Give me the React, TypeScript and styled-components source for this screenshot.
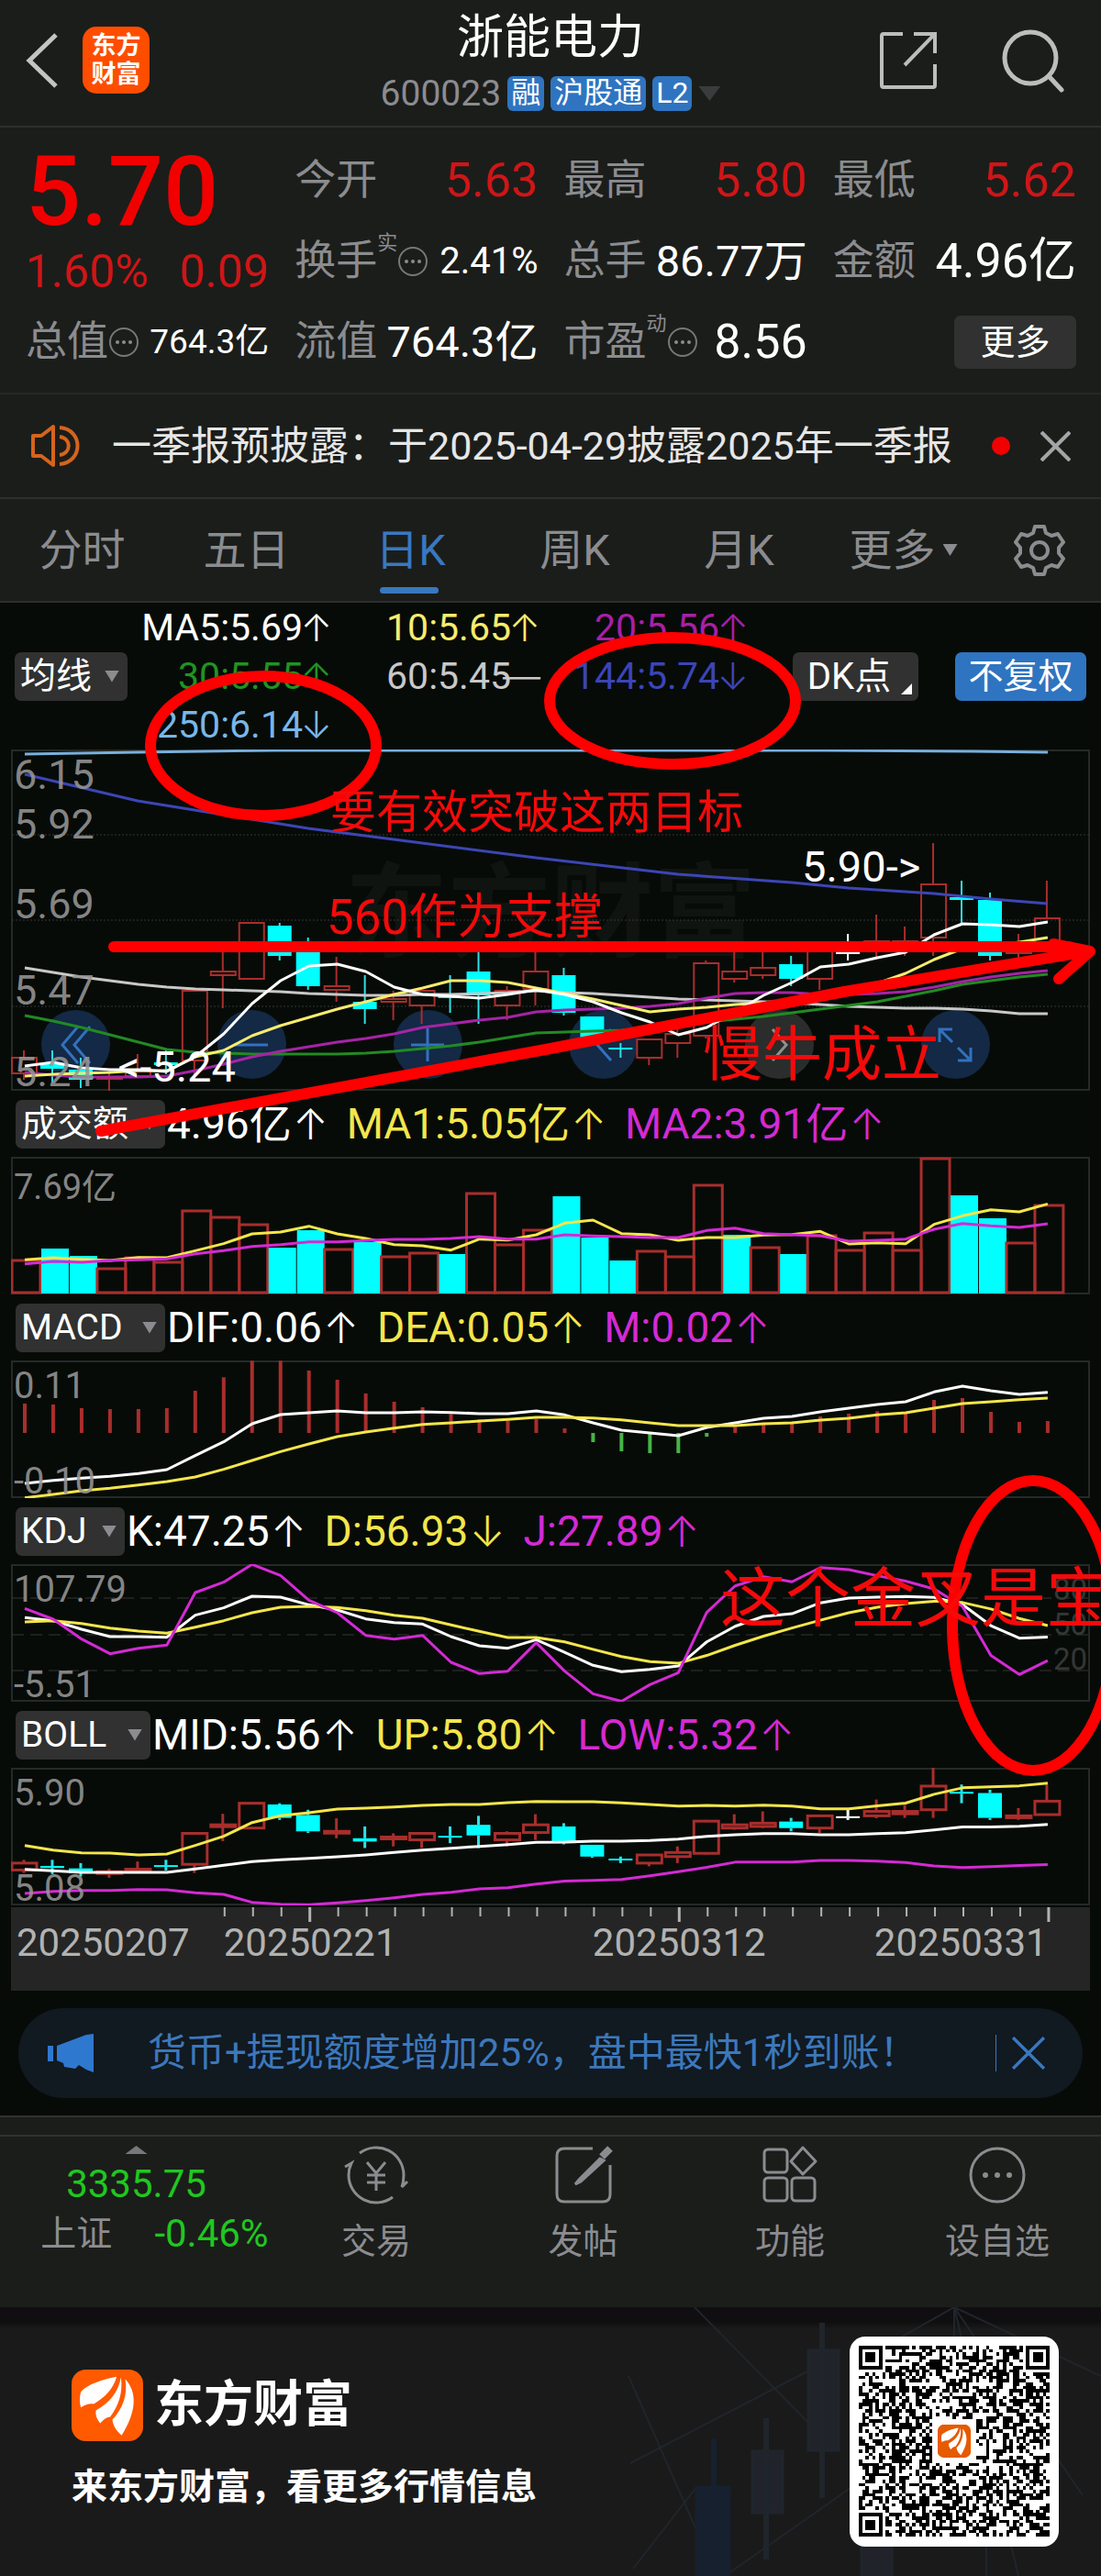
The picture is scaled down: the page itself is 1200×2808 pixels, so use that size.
import React from "react";
import styled, { createGlobalStyle } from "styled-components";

const Global = createGlobalStyle`
  * { box-sizing: border-box; }
  body { margin: 0; background: #1b1d1a; }
  button, select { font: inherit; color: inherit; border: 0; margin: 0; padding: 0; background: none; cursor: pointer; }
`;

const RED = "#a82e2c";
const CYAN = "#00ffff";
const YELLOW = "#f3e64b";
const PINK = "#d42ad4";

const Page = styled.div`
  display: flex;
  flex-direction: column;
  overflow-x: hidden;
  background: #1b1d1a;
  color: #fff;
  font-family: Roboto, "Noto Sans CJK SC", sans-serif;
`;

/* ---------- header ---------- */
const Header = styled.header`
  display: grid;
  grid-template-columns: 1fr auto 1fr;
  height: 139px;
  border-bottom: 2px solid #2d2f2d;
`;
const HeaderSide = styled.div<{ $end?: boolean }>`
  display: flex;
  align-items: center;
  justify-content: ${(p) => (p.$end ? "flex-end" : "flex-start")};
  gap: ${(p) => (p.$end ? 70 : 26)}px;
  padding: ${(p) => (p.$end ? "0 40px 6px 0" : "0 0 6px 28px")};
`;
const IconButton = styled.button`
  display: flex;
  align-items: center;
  justify-content: center;
  flex: none;
`;
const CloseButton = styled(IconButton)`
  color: #a5a5a7;
`;
const AppBadge = styled.div`
  display: flex;
  flex-direction: column;
  align-items: center;
  justify-content: center;
  width: 73px;
  height: 73px;
  border-radius: 15px;
  background: #ff4d00;
  font-size: 27px;
  line-height: 31px;
  font-weight: 700;
`;
const TitleBlock = styled.div`
  display: flex;
  flex-direction: column;
  align-items: center;
`;
const Title = styled.h1`
  margin: 9px 0 0;
  font-size: 51px;
  line-height: 64px;
  font-weight: 400;
`;
const CodeRow = styled.div`
  display: flex;
  align-items: center;
  gap: 7px;
  height: 58px;
  font-size: 39px;
  color: #8b8c90;
`;
const Tag = styled.span`
  height: 38px;
  padding: 0 4px;
  border-radius: 6px;
  background: #2f74c0;
  color: #fff;
  font-size: 32px;
  line-height: 37px;
`;
const Triangle = styled.span<{ $w: number; $h: number; $c: string; $up?: boolean }>`
  flex: none;
  width: ${(p) => p.$w}px;
  height: ${(p) => p.$h}px;
  background: ${(p) => p.$c};
  clip-path: ${(p) => (p.$up ? "polygon(50% 0, 100% 100%, 0 100%)" : "polygon(0 0, 100% 0, 50% 100%)")};
`;

/* ---------- quote ---------- */
const Quote = styled.section`
  display: grid;
  grid-template-columns: repeat(4, minmax(0, 1fr));
  grid-auto-rows: 88px;
  column-gap: 28px;
  padding: 14px 27px 11px 28px;
  border-bottom: 2px solid #262826;
`;
const PriceCell = styled.div`
  grid-row: span 2;
  display: flex;
  flex-direction: column;
  color: #d01517;
`;
const Price = styled.div`
  font-size: 106px;
  line-height: 112px;
  font-weight: 500;
  color: #f20000;
`;
const Change = styled.div`
  display: flex;
  justify-content: space-between;
  font-size: 50px;
  line-height: 62px;
`;
const Cell = styled.div`
  display: flex;
  align-items: center;
  justify-content: space-between;
  white-space: nowrap;
`;
const Label = styled.span`
  display: flex;
  align-items: center;
  font-size: 45px;
  line-height: 60px;
  color: #8b8c90;
`;
const Sup = styled.sup`
  align-self: flex-start;
  font-size: 22px;
  line-height: 20px;
`;
const Value = styled.span<{ $size?: number; $red?: boolean }>`
  font-size: ${(p) => p.$size ?? 52}px;
  line-height: 60px;
  color: ${(p) => (p.$red ? "#d01517" : "#fff")};
`;
const MoreButton = styled.button`
  width: 133px;
  height: 58px;
  margin-left: auto;
  border-radius: 7px;
  background: #303130;
  font-size: 38px;
  line-height: 54px;
`;

/* ---------- notice ---------- */
const Notice = styled.section`
  display: flex;
  align-items: center;
  height: 114px;
  padding: 0 33px;
  border-bottom: 2px solid #2d2f2d;
`;
const NoticeText = styled.a`
  flex: 1;
  margin-left: 34px;
  overflow: hidden;
  white-space: nowrap;
  font-size: 43px;
  line-height: 60px;
  color: #e6e6e6;
  text-decoration: none;
`;
const Dot = styled.span`
  width: 20px;
  height: 20px;
  margin-right: 33px;
  border-radius: 50%;
  background: #f20000;
`;

/* ---------- tabs ---------- */
const Tabs = styled.nav`
  display: grid;
  grid-template-columns: repeat(6, 1fr) 126px;
  height: 113px;
  border-bottom: 2px solid #2d2f2d;
`;
const Tab = styled.button<{ $active?: boolean }>`
  position: relative;
  display: flex;
  align-items: center;
  justify-content: center;
  gap: 8px;
  font-size: 47px;
  line-height: 60px;
  color: ${(p) => (p.$active ? "#3878c0" : "#8b8c90")};
  &::after {
    content: "";
    display: ${(p) => (p.$active ? "block" : "none")};
    position: absolute;
    left: 50%;
    bottom: 8px;
    width: 64px;
    height: 7px;
    margin-left: -34px;
    border-radius: 4px;
    background: #3878c0;
  }
`;
const GearButton = styled(IconButton)`
  padding-right: 8px;
`;

/* ---------- charts ---------- */
const Charts = styled.section`
  position: relative;
  background: #070b08;
`;
const LegendRow = styled.div`
  display: flex;
  align-items: center;
  height: 160px;
  padding: 0 16px;
`;
const Legend = styled.div`
  flex: 1;
  display: grid;
  grid-template-columns: 223fr 227fr 227fr;
  grid-auto-rows: 53px;
`;
const LegendItem = styled.span<{ $c: string }>`
  display: flex;
  align-items: center;
  justify-content: flex-end;
  font-size: 41px;
  line-height: 50px;
  color: ${(p) => p.$c};
`;
const ArrowGlyph = styled.span<{ $w: number }>`
  display: flex;
  justify-content: flex-end;
  width: ${(p) => p.$w}px;
  font-family: Inter, sans-serif;
  font-weight: 300;
`;
const Picker = styled.label<{ $w: number }>`
  position: relative;
  flex: none;
  display: flex;
  align-items: center;
  width: ${(p) => p.$w}px;
  height: 53px;
  padding-right: 9px;
  border-radius: 7px;
  background: #303130;
`;
const PickerSelect = styled.select`
  flex: 1;
  min-width: 0;
  height: 53px;
  padding-left: 6px;
  appearance: none;
  outline: none;
  font-size: 39px;
`;
const DkButton = styled.button`
  position: relative;
  width: 137px;
  height: 53px;
  margin: 0 40px 0 48px;
  padding-right: 14px;
  border-radius: 7px;
  background: #303130;
  font-size: 40px;
  line-height: 51px;
  &::after {
    content: "";
    position: absolute;
    right: 7px;
    bottom: 7px;
    border-left: 12px solid transparent;
    border-bottom: 12px solid #fff;
  }
`;
const AdjustButton = styled.button`
  width: 143px;
  height: 53px;
  border-radius: 7px;
  background: #2f74c0;
  font-size: 38px;
  line-height: 49px;
`;
const Panel = styled.div<{ $h: number }>`
  position: relative;
  height: ${(p) => p.$h}px;
  margin: 0 12px;
`;
const Plot = styled.svg`
  display: block;
  width: 100%;
  height: 100%;
`;
const OverPlot = styled(Plot)`
  position: relative;
  pointer-events: none;
`;
const Axis = styled.span<{ $top: number; $size?: number }>`
  position: absolute;
  left: 3px;
  top: ${(p) => p.$top}px;
  font-size: ${(p) => p.$size ?? 40}px;
  line-height: 50px;
  color: rgba(150, 150, 150, 0.9);
`;
const Level = styled.span<{ $top: number }>`
  position: absolute;
  right: 3px;
  top: ${(p) => p.$top}px;
  font-size: 33px;
  line-height: 40px;
  color: #343735;
`;
const Extreme = styled.span<{ $x: number; $y: number }>`
  position: absolute;
  left: ${(p) => p.$x}%;
  top: ${(p) => p.$y}px;
  font-size: 47px;
  line-height: 50px;
`;
const Watermark = styled.span`
  position: absolute;
  top: 105px;
  left: 0;
  right: 0;
  text-align: center;
  font-size: 112px;
  line-height: 150px;
  font-weight: 700;
  color: #101411;
`;
const ZoomBar = styled.div`
  position: absolute;
  left: 33px;
  right: 109px;
  bottom: 13px;
  display: flex;
  justify-content: space-between;
`;
const RoundButton = styled.button<{ $muted?: boolean }>`
  display: flex;
  align-items: center;
  justify-content: center;
  width: 75px;
  height: 75px;
  border-radius: 50%;
  background: ${(p) => (p.$muted ? "rgba(66,68,67,.6)" : "rgba(28,62,110,.6)")};
  color: ${(p) => (p.$muted ? "#8f9090" : "#3271bd")};
`;
const IndicatorRow = styled.div`
  display: flex;
  align-items: center;
  height: 72px;
  padding-left: 17px;
  gap: 20px;
  white-space: nowrap;
`;
const IndicatorLead = styled.div`
  display: flex;
  align-items: center;
  gap: 2px;
`;
const Reading = styled.span<{ $c: string }>`
  display: flex;
  align-items: center;
  font-size: 46px;
  line-height: 50px;
  color: ${(p) => p.$c};
`;
const Dates = styled.div`
  position: relative;
  height: 91px;
  margin: 2px 12px 0;
  background: #242524;
`;
const DateText = styled.span<{ $x: number }>`
  position: absolute;
  left: ${(p) => p.$x}%;
  top: 14px;
  font-size: 42px;
  line-height: 50px;
  color: #b2b2b2;
`;
const Notes = styled.svg`
  position: absolute;
  left: 0;
  top: 0;
  width: 100%;
  pointer-events: none;
`;

/* ---------- promo ---------- */
const PromoWrap = styled.section`
  padding: 19px 20px;
  background: #070b08;
`;
const Promo = styled.div`
  display: flex;
  align-items: center;
  height: 98px;
  padding: 0 41px 0 32px;
  border-radius: 49px;
  background: #111921;
  color: #3878c0;
`;
const PromoText = styled.a`
  flex: 1;
  margin-left: 58px;
  overflow: hidden;
  white-space: nowrap;
  font-size: 42px;
  line-height: 60px;
  color: #3c78bb;
  text-decoration: none;
`;
const PromoClose = styled.button`
  display: flex;
  height: 40px;
  padding-left: 17px;
  align-items: center;
  border-left: 1px solid #3878c0;
`;

/* ---------- bottom bar ---------- */
const Strip = styled.div`
  height: 23px;
  border-top: 2px solid #313331;
  border-bottom: 2px solid #313331;
`;
const BottomBar = styled.nav`
  display: grid;
  grid-template-columns: 297fr 226fr 225fr 226fr 226fr;
  height: 186px;
`;
const IndexCell = styled.button`
  display: flex;
  flex-direction: column;
  align-items: center;
  padding-top: 10px;
  color: #1fc81f;
  font-size: 42px;
`;
const IndexValue = styled.span`
  margin: 6px 0 4px;
  line-height: 54px;
`;
const IndexRow = styled.span`
  display: flex;
  gap: 46px;
  padding-left: 40px;
  line-height: 46px;
`;
const IndexName = styled.span`
  color: #8b8c90;
  font-size: 39px;
`;
const NavItem = styled.button`
  display: flex;
  flex-direction: column;
  align-items: center;
  gap: 12px;
  padding-top: 9px;
  font-size: 38px;
  line-height: 54px;
  color: #8b8c90;
`;

/* ---------- footer ---------- */
const Footer = styled.footer`
  position: relative;
  display: flex;
  justify-content: space-between;
  height: 293px;
  padding: 32px 46px 0 78px;
  background: linear-gradient(#100d10 0, #100f10 16px, #1a1a1a 24px);
`;
const FooterArt = styled.svg`
  position: absolute;
  right: 0;
  top: 0;
`;
const Brand = styled.div`
  padding-top: 36px;
`;
const BrandRow = styled.div`
  display: flex;
  align-items: center;
  gap: 12px;
  font-size: 54px;
  line-height: 78px;
  font-weight: 700;
`;
const Tagline = styled.p`
  margin: 22px 0 0;
  font-size: 39px;
  line-height: 56px;
  font-weight: 700;
`;
const QrCard = styled.div`
  position: relative;
  width: 228px;
  height: 229px;
  padding: 10px;
  border-radius: 17px;
  background: #fff;
`;

/* ---------- data ---------- */
const xAt = (i: number) => 27 + 30.97 * i;

type Kind = "up" | "down" | "flat";
// kind, high, body top, body bottom, low
const candles: [Kind, number, number, number, number][] = [
  ["up", 1145, 1153, 1170, 1177], ["down", 1145, 1160, 1165, 1180], ["down", 1153, 1166, 1177, 1186],
  ["up", 1167, 1174, 1176, 1189], ["up", 1149, 1168, 1173, 1173], ["down", 1145, 1158, 1161, 1171],
  ["up", 1080, 1080, 1156, 1177], ["up", 1032, 1059, 1063, 1099], ["up", 1006, 1006, 1067, 1067],
  ["down", 1006, 1009, 1042, 1047], ["down", 1022, 1035, 1075, 1079], ["up", 1043, 1075, 1079, 1092],
  ["down", 1063, 1092, 1100, 1116], ["up", 1080, 1089, 1092, 1112], ["up", 1080, 1080, 1096, 1116],
  ["down", 1063, 1086, 1088, 1104], ["down", 1037, 1059, 1085, 1116], ["up", 1075, 1080, 1096, 1112],
  ["up", 1033, 1059, 1078, 1096], ["down", 1055, 1063, 1104, 1107], ["down", 1108, 1108, 1137, 1140],
  ["down", 1137, 1142, 1144, 1153], ["up", 1133, 1133, 1153, 1161], ["up", 1112, 1127, 1137, 1153],
  ["up", 1047, 1050, 1129, 1132], ["up", 1033, 1059, 1067, 1071], ["up", 1026, 1055, 1063, 1067],
  ["down", 1042, 1051, 1067, 1075], ["up", 1034, 1037, 1067, 1079], ["flat", 1018, 1038, 1040, 1047],
  ["up", 997, 1026, 1037, 1043], ["up", 1010, 1026, 1032, 1042], ["up", 919, 964, 1022, 1042],
  ["down", 960, 978, 981, 1006], ["down", 973, 981, 1042, 1047], ["up", 1018, 1037, 1039, 1047],
  ["up", 960, 1001, 1034, 1036],
];

const ma5 = [1162, 1158, 1164, 1166, 1166, 1168, 1152, 1127, 1094, 1069, 1053, 1051, 1059, 1076, 1084, 1086, 1088, 1084, 1079, 1084, 1092, 1104, 1114, 1128, 1120, 1103, 1085, 1071, 1054, 1051, 1044, 1038, 1019, 1007, 1008, 1010, 1005];
const ma10 = [1173, 1171, 1170, 1169, 1167, 1167, 1152, 1145, 1129, 1118, 1109, 1100, 1092, 1084, 1077, 1069, 1069, 1071, 1077, 1083, 1089, 1096, 1103, 1100, 1098, 1095, 1093, 1090, 1087, 1080, 1072, 1061, 1046, 1034, 1031, 1027, 1022];
const ma20 = [1169, 1172, 1174, 1174, 1174, 1173, 1167, 1160, 1152, 1146, 1141, 1136, 1132, 1127, 1120, 1116, 1112, 1109, 1103, 1101, 1100, 1099, 1097, 1094, 1088, 1083, 1082, 1082, 1084, 1084, 1083, 1081, 1076, 1070, 1065, 1061, 1058];
const ma30 = [1107, 1113, 1120, 1128, 1136, 1144, 1147, 1148, 1149, 1149, 1149, 1149, 1148, 1146, 1143, 1140, 1136, 1131, 1126, 1125, 1124, 1123, 1121, 1118, 1114, 1111, 1108, 1104, 1100, 1096, 1092, 1086, 1080, 1073, 1069, 1065, 1062];
const ma60 = [1055, 1060, 1065, 1069, 1073, 1076, 1078, 1079, 1080, 1081, 1083, 1084, 1085, 1085, 1084, 1084, 1083, 1082, 1080, 1082, 1083, 1085, 1087, 1089, 1090, 1091, 1092, 1093, 1095, 1097, 1098, 1099, 1099, 1100, 1102, 1105, 1105];

const volume = [1373, 1361, 1369, 1382, 1370, 1375, 1319, 1326, 1334, 1360, 1341, 1361, 1354, 1369, 1365, 1367, 1300, 1356, 1340, 1304, 1349, 1374, 1363, 1369, 1291, 1346, 1359, 1367, 1346, 1362, 1343, 1362, 1262, 1303, 1328, 1354, 1313];
const volumeDown = new Set([1, 2, 9, 10, 12, 15, 19, 20, 21, 25, 27, 33, 34]);
const third = (base: number) => (v: number) => base + v / 3;
const wide = (v: number) => 1580 + v / 2.703;
const volMa1 = [520, 513, 518, 522, 512, 513, 490, 467, 435, 429, 410, 435, 450, 470, 474, 488, 452, 455, 438, 400, 390, 434, 438, 456, 447, 447, 439, 437, 427, 468, 464, 467, 404, 376, 356, 363, 337].map(third(1200));
const volMa2 = [533, 525, 528, 522, 520, 517, 500, 490, 476, 470, 461, 461, 457, 453, 453, 450, 444, 452, 452, 438, 442, 444, 447, 447, 424, 416, 434, 438, 441, 459, 456, 452, 420, 401, 409, 414, 402].map(third(1200));
const hist = [990, 993, 1005, 1008, 1008, 1005, 948, 904, 850, 850, 882, 912, 957, 984, 1002, 1024, 1042, 1046, 1040, 1071, 1116, 1146, 1152, 1152, 1098, 1066, 1052, 1049, 1032, 1023, 1015, 1017, 978, 972, 1017, 1050, 1047].map(third(1200));
const dif = [1251, 1241, 1234, 1228, 1219, 1206, 1160, 1115, 1056, 1026, 1020, 1014, 1020, 1020, 1017, 1019, 1023, 1023, 1014, 1027, 1053, 1077, 1086, 1095, 1068, 1053, 1038, 1032, 1017, 1005, 993, 984, 952, 933, 948, 960, 953].map(third(1200));
const dea = [1298, 1287, 1275, 1267, 1256, 1245, 1230, 1205, 1176, 1147, 1122, 1098, 1083, 1070, 1058, 1053, 1047, 1042, 1035, 1035, 1037, 1043, 1053, 1062, 1062, 1062, 1056, 1053, 1044, 1038, 1027, 1020, 1005, 990, 984, 977, 972].map(third(1200));

const join = (a: number[], b: number[]) => [...a.map(third(1640)), ...b.map(wide)];
const kLine = join([370, 380, 408, 432, 432, 434, 362, 338, 300, 303, 328, 345, 374, 386, 391, 432, 462, 470, 442], [598, 636, 655, 648, 638, 567, 521, 492, 484, 452, 438, 435, 433, 436, 457, 519, 556, 553]);
const dLine = join([384, 380, 389, 404, 414, 421, 401, 380, 354, 336, 333, 337, 347, 362, 372, 394, 415, 435, 435], [567, 589, 610, 625, 630, 607, 577, 550, 526, 503, 481, 465, 454, 447, 451, 470, 498, 519]);
const jLine = join([340, 375, 440, 488, 470, 460, 288, 254, 196, 232, 313, 354, 428, 440, 428, 516, 553, 545, 452], [653, 720, 742, 693, 658, 480, 402, 375, 390, 348, 354, 372, 388, 411, 462, 607, 663, 622]);
const bollUp = join([1115, 1130, 1139, 1140, 1146, 1143, 1115, 1085, 1040, 1018, 1008, 996, 993, 989, 984, 981, 981, 975, 971], [1038, 1038, 1041, 1046, 1051, 1049, 1051, 1048, 1051, 1059, 1059, 1050, 1042, 1016, 997, 994, 991, 983]);
const bollMid = join([1193, 1198, 1203, 1203, 1203, 1203, 1192, 1180, 1168, 1162, 1157, 1152, 1146, 1138, 1130, 1124, 1118, 1112, 1105], [1157, 1154, 1154, 1152, 1148, 1140, 1135, 1132, 1132, 1135, 1135, 1132, 1129, 1121, 1112, 1112, 1110, 1105]);
const bollLow = join([1272, 1265, 1262, 1262, 1259, 1260, 1270, 1275, 1301, 1307, 1309, 1303, 1295, 1286, 1275, 1268, 1257, 1253, 1241], [1272, 1270, 1267, 1256, 1244, 1231, 1216, 1216, 1216, 1211, 1211, 1213, 1217, 1227, 1232, 1229, 1226, 1223]);

/* ---------- drawing helpers ---------- */
const Line = ({ ys, c, w = 3 }: { ys: number[]; c: string; w?: number }) => (
  <polyline points={ys.map((y, i) => `${xAt(i)},${y}`).join(" ")} fill="none" stroke={c} strokeWidth={w} strokeLinejoin="round" />
);
const Border = ({ top, h }: { top: number; h: number }) => (
  <rect x="13" y={top + 1} width="1174" height={h - 2} fill="none" stroke="#252927" strokeWidth="2" />
);
const Candles = ({ y = (v: number) => v, w = 2 }: { y?: (v: number) => number; w?: number }) => (
  <g strokeWidth={w}>
    {candles.map(([kind, high, top, bottom, low], i) => {
      const x = xAt(i) - 1;
      const c = kind === "up" ? RED : kind === "down" ? "#2fe0e6" : "#fff";
      const h = Math.max(y(bottom) - y(top), 2);
      return (
        <g key={i} stroke={c}>
          <line x1={x} x2={x} y1={y(high)} y2={y(top)} />
          <line x1={x} x2={x} y1={y(top) + h} y2={y(low)} />
          {kind === "up" ? (
            <rect x={x - 13} y={y(top)} width="27" height={h} fill="none" />
          ) : (
            <rect x={x - 13} y={y(top)} width="26" height={h} fill={kind === "down" ? CYAN : "#fff"} stroke="none" />
          )}
        </g>
      );
    })}
  </g>
);

const Ellipsis = () => (
  <svg width="34" height="34" viewBox="0 0 34 34" aria-hidden="true">
    <circle cx="17" cy="17" r="15" fill="none" stroke="#77787a" strokeWidth="2" />
    <g fill="#8b8c90"><circle cx="10" cy="17" r="2" /><circle cx="17" cy="17" r="2" /><circle cx="24" cy="17" r="2" /></g>
  </svg>
);
const Close = ({ size, w = 4 }: { size: number; w?: number }) => (
  <svg width={size} height={size} viewBox="0 0 32 32" fill="none" stroke="currentColor" strokeWidth={w} aria-hidden="true">
    <path d="M1 1 31 31M31 1 1 31" />
  </svg>
);
const Feathers = ({ size, bg = "#ff5a00" }: { size: number; bg?: string }) => (
  <svg width={size} height={size} viewBox="0 0 100 100" aria-hidden="true">
    <rect width="100" height="100" rx="20" fill={bg} />
    <g fill="#fff">
      <path d="M63 10C42 14 22 21 13 31C11 38 11 46 13 53C20 48 26 47 31 48C46 39 58 28 63 10Z" />
      <path d="M69 11C65 32 54 46 34 57C33 63 35 69 40 75C45 69 50 66 54 66C66 50 72 32 69 11Z" />
      <path d="M75 13C79 36 71 55 57 70C58 79 63 86 70 92C75 84 79 76 82 68C91 45 87 26 75 13Z" />
    </g>
  </svg>
);

const indicators = ["成交额", "MACD", "KDJ", "BOLL"];
const Indicator = ({ value, width, options = indicators, label }: { value: string; width: number; options?: string[]; label: string }) => (
  <Picker $w={width}>
    <PickerSelect aria-label={label} defaultValue={value}>
      {options.map((o) => <option key={o}>{o}</option>)}
    </PickerSelect>
    <Triangle $w={16} $h={13} $c="#8b8c90" />
  </Picker>
);

type ReadingData = [string, string, string];
const IndicatorHeader = ({ name, width, items }: { name: string; width: number; items: ReadingData[] }) => {
  const [lead, ...rest] = items.map(([text, arrow, c]) => (
    <Reading key={text} $c={c}>{text}<ArrowGlyph $w={40}>{arrow}</ArrowGlyph></Reading>
  ));
  return (
    <IndicatorRow>
      <IndicatorLead><Indicator label="指标" value={name} width={width} />{lead}</IndicatorLead>
      {rest}
    </IndicatorRow>
  );
};

const QR = 57;
const qrModules = (() => {
  let seed = 20250331;
  const next = () => {
    seed = (seed * 1103515245 + 12345) % 2147483648;
    return seed / 2147483648;
  };
  let d = "";
  const finder = (x: number, y: number) => (x < 8 && y < 8) || (x > QR - 9 && y < 8) || (x < 8 && y > QR - 9);
  for (let y = 0; y < QR; y++)
    for (let x = 0; x < QR; x++) {
      const on = next() > 0.48;
      const logo = Math.abs(x - 28) < 7 && Math.abs(y - 28) < 7;
      if (on && !finder(x, y) && !logo) d += `M${x} ${y}h1v1h-1z`;
    }
  return d;
})();
const Qr = () => (
  <svg width="208" height="208" viewBox="0 0 57 57" shapeRendering="crispEdges" role="img" aria-label="二维码">
    <path d={qrModules} />
    {[[0, 0], [50, 0], [0, 50]].map(([x, y]) => (
      <g key={`${x}-${y}`}>
        <rect x={x + 0.5} y={y + 0.5} width="6" height="6" fill="none" stroke="#000" />
        <rect x={x + 2} y={y + 2} width="3" height="3" />
      </g>
    ))}
    <svg x="23.5" y="23.5" width="10" height="10" shapeRendering="auto"><Feathers size={10} bg="#e65a00" /></svg>
  </svg>
);

const legend: ReadingData[] = [
  ["MA5:5.69", "↑", "#fff"], ["10:5.65", "↑", "#f7ec6e"], ["20:5.56", "↑", "#a81fa8"],
  ["30:5.55", "↑", "#1f951f"], ["60:5.45", "—", "#c8c8c8"], ["144:5.74", "↓", "#3b45b8"],
  ["250:6.14", "↓", "#78b7e8"],
];

export default function App() {
  return (
    <Page>
      <Global />
      <Header>
        <HeaderSide>
          <IconButton aria-label="返回">
            <svg width="36" height="60" viewBox="0 0 36 60" fill="none" stroke="#c4c4c4" strokeWidth="5"><path d="M33 2 4 30 33 58" /></svg>
          </IconButton>
          <AppBadge><span>东方</span><span>财富</span></AppBadge>
        </HeaderSide>
        <TitleBlock>
          <Title>浙能电力</Title>
          <CodeRow>
            600023<Tag>融</Tag><Tag>沪股通</Tag><Tag>L2</Tag>
            <Triangle $w={24} $h={16} $c="#3a3b3c" />
          </CodeRow>
        </TitleBlock>
        <HeaderSide $end>
          <IconButton aria-label="分享">
            <svg width="64" height="64" viewBox="0 0 64 64" fill="none" stroke="#bdbdbd" strokeWidth="4">
              <path d="M26 3H5Q3 3 3 5V59Q3 61 5 61H59Q61 61 61 59V36M38 3H61V24M60 4 28 37" />
            </svg>
          </IconButton>
          <IconButton aria-label="搜索">
            <svg width="68" height="70" viewBox="0 0 68 70" fill="none" stroke="#bdbdbd" strokeWidth="5" strokeLinecap="round">
              <circle cx="31" cy="32" r="28" /><path d="M51 52 65 67" />
            </svg>
          </IconButton>
        </HeaderSide>
      </Header>

      <Quote>
        <PriceCell>
          <Price>5.70</Price>
          <Change><span>1.60%</span><span>0.09</span></Change>
        </PriceCell>
        <Cell><Label>今开</Label><Value $red>5.63</Value></Cell>
        <Cell><Label>最高</Label><Value $red>5.80</Value></Cell>
        <Cell><Label>最低</Label><Value $red>5.62</Value></Cell>
        <Cell><Label>换手<Sup>实</Sup><Ellipsis /></Label><Value $size={40}>2.41%</Value></Cell>
        <Cell><Label>总手</Label><Value $size={47}>86.77万</Value></Cell>
        <Cell><Label>金额</Label><Value>4.96亿</Value></Cell>
        <Cell><Label>总值<Ellipsis /></Label><Value $size={37}>764.3亿</Value></Cell>
        <Cell><Label>流值</Label><Value $size={47}>764.3亿</Value></Cell>
        <Cell><Label>市盈<Sup>动</Sup><Ellipsis /></Label><Value>8.56</Value></Cell>
        <Cell><MoreButton>更多</MoreButton></Cell>
      </Quote>

      <Notice>
        <svg width="55" height="48" viewBox="0 0 55 48" fill="none" stroke="#d5641c" strokeWidth="4" aria-hidden="true">
          <path d="M3 13H12L25 3V45L12 35H3Z" strokeLinejoin="round" /><path d="M32 4C58 6 58 42 32 44M32 14C45 16 45 32 32 34" />
        </svg>
        <NoticeText href="#notice">一季报预披露：于2025-04-29披露2025年一季报</NoticeText>
        <Dot />
        <CloseButton aria-label="关闭公告"><Close size={33} /></CloseButton>
      </Notice>

      <Tabs>
        <Tab>分时</Tab>
        <Tab>五日</Tab>
        <Tab $active>日K</Tab>
        <Tab>周K</Tab>
        <Tab>月K</Tab>
        <Tab>更多<Triangle $w={16} $h={13} $c="#8b8c90" /></Tab>
        <GearButton aria-label="设置">
          <svg width="56" height="56" viewBox="0 0 56 56" fill="none" stroke="#8b8c90" strokeWidth="4" strokeLinejoin="round">
            <path d="M23 2H33L35 9 41 12 48 10 54 19 49 25V31L54 37 48 46 41 44 35 47 33 54H23L21 47 15 44 8 46 2 37 7 31V25L2 19 8 10 15 12 21 9Z" />
            <circle cx="28" cy="28" r="9" />
          </svg>
        </GearButton>
      </Tabs>

      <Charts>
        <LegendRow>
          <Indicator label="主图指标" value="均线" options={["均线", "BOLL"]} width={123} />
          <Legend>
            {legend.map(([t, a, c]) => <LegendItem key={t} $c={c}>{t}<ArrowGlyph $w={32}>{a}</ArrowGlyph></LegendItem>)}
          </Legend>
          <DkButton>DK点</DkButton>
          <AdjustButton>不复权</AdjustButton>
        </LegendRow>

        <Panel $h={372}>
          <Watermark aria-hidden="true">东方财富</Watermark>
          <ZoomBar>
            <RoundButton aria-label="最早">
              <svg width="36" height="44" viewBox="0 0 36 44" fill="none" stroke="currentColor" strokeWidth="3"><path d="M20 2 3 22 20 42M33 2 16 22 33 42" /></svg>
            </RoundButton>
            <RoundButton aria-label="缩小">
              <svg width="38" height="38" viewBox="0 0 38 38" stroke="currentColor" strokeWidth="3"><path d="M1 19H37" /></svg>
            </RoundButton>
            <RoundButton aria-label="放大">
              <svg width="38" height="38" viewBox="0 0 38 38" stroke="currentColor" strokeWidth="3"><path d="M1 19H37M19 1V37" /></svg>
            </RoundButton>
            <RoundButton aria-label="前移">
              <svg width="24" height="40" viewBox="0 0 24 40" fill="none" stroke="currentColor" strokeWidth="3"><path d="M20 3 5 20 20 37" /></svg>
            </RoundButton>
            <RoundButton $muted aria-label="后移">
              <svg width="24" height="40" viewBox="0 0 24 40" fill="none" stroke="currentColor" strokeWidth="3"><path d="M4 3 19 20 4 37" /></svg>
            </RoundButton>
            <RoundButton aria-label="全屏">
              <svg width="38" height="38" viewBox="0 0 38 38" fill="none" stroke="currentColor" strokeWidth="3"><path d="M16 2H2V16M2 2 16 16M22 36H36V22M36 36 22 22" /></svg>
            </RoundButton>
          </ZoomBar>
          <OverPlot viewBox="12 817 1176 372" preserveAspectRatio="none">
            <Border top={817} h={372} />
            <path d="M13 910H1187M13 1003H1187M13 1097H1187" stroke="#343735" strokeDasharray="2 2" />
            <Candles />
            <Line ys={ma60} c="#c8c8c8" />
            <Line ys={ma30} c="#228a22" />
            <Line ys={ma20} c="#a524a5" />
            <Line ys={ma10} c="#f7ec6e" />
            <Line ys={ma5} c="#fff" />
            <polyline points="27,844 150,873 243,888 336,903 460,919 584,935 739,953 863,962 925,968 1018,974 1080,980 1142,985" fill="none" stroke="#3c46b4" strokeWidth="3" />
            <polyline points="27,822 150,820 300,818 900,818 1060,819 1142,820" fill="none" stroke="#78b0dc" strokeWidth="3" />
          </OverPlot>
          <Axis $top={3} $size={45}>6.15</Axis>
          <Axis $top={57} $size={45}>5.92</Axis>
          <Axis $top={144} $size={45}>5.69</Axis>
          <Axis $top={238} $size={45}>5.47</Axis>
          <Axis $top={327} $size={45}>5.24</Axis>
          <Extreme $x={9.9} $y={321}>&lt;-5.24</Extreme>
          <Extreme $x={73.3} $y={103}>5.90-&gt;</Extreme>
        </Panel>

        <IndicatorHeader name="成交额" width={163} items={[["4.96亿", "↑", "#fff"], ["MA1:5.05亿", "↑", YELLOW], ["MA2:3.91亿", "↑", PINK]]} />
        <Panel $h={150}>
          <Plot viewBox="12 1261 1176 150" preserveAspectRatio="none">
            <Border top={1261} h={150} />
            {volume.map((y, i) => {
              const down = volumeDown.has(i);
              const x = xAt(i) - 14;
              return down ? (
                <rect key={i} x={x + 1} y={y} width="30" height={1410 - y} fill={CYAN} />
              ) : (
                <rect key={i} x={x} y={y + 1} width="31" height={1408 - y} fill="none" stroke={RED} strokeWidth="3" />
              );
            })}
            <Line ys={volMa1} c={YELLOW} />
            <Line ys={volMa2} c={PINK} />
          </Plot>
          <Axis $top={8} $size={38}>7.69亿</Axis>
        </Panel>

        <IndicatorHeader name="MACD" width={163} items={[["DIF:0.06", "↑", "#fff"], ["DEA:0.05", "↑", YELLOW], ["M:0.02", "↑", PINK]]} />
        <Panel $h={150}>
          <Plot viewBox="12 1483 1176 150" preserveAspectRatio="none">
            <Border top={1483} h={150} />
            {hist.map((y, i) => (
              <line key={i} x1={xAt(i)} x2={xAt(i)} y1="1562" y2={y} stroke={y > 1562 ? "#46b446" : RED} strokeWidth="4" />
            ))}
            <Line ys={dif} c="#fff" />
            <Line ys={dea} c={YELLOW} />
          </Plot>
          <Axis $top={3}>0.11</Axis>
          <Axis $top={107}>-0.10</Axis>
        </Panel>

        <IndicatorHeader name="KDJ" width={119} items={[["K:47.25", "↑", "#fff"], ["D:56.93", "↓", YELLOW], ["J:27.89", "↑", PINK]]} />
        <Panel $h={150}>
          <Plot viewBox="12 1705 1176 150" preserveAspectRatio="none">
            <Border top={1705} h={150} />
            <path d="M13 1742H1187M13 1782H1187M13 1821H1187" stroke="#343735" strokeWidth="1" strokeDasharray="13 7" />
            <Line ys={kLine} c="#fff" />
            <Line ys={dLine} c={YELLOW} />
            <Line ys={jLine} c={PINK} />
          </Plot>
          <Axis $top={3}>107.79</Axis>
          <Axis $top={107}>-5.51</Axis>
          <Level $top={8}>80</Level>
          <Level $top={46}>50</Level>
          <Level $top={84}>20</Level>
        </Panel>

        <IndicatorHeader name="BOLL" width={147} items={[["MID:5.56", "↑", "#fff"], ["UP:5.80", "↑", YELLOW], ["LOW:5.32", "↑", PINK]]} />
        <Panel $h={150}>
          <Plot viewBox="12 1927 1176 150" preserveAspectRatio="none">
            <Border top={1927} h={150} />
            <Candles w={3} y={(v) => 1927 + (v - 919) * 0.444} />
            <Line ys={bollMid} c="#fff" />
            <Line ys={bollUp} c={YELLOW} />
            <Line ys={bollLow} c={PINK} />
          </Plot>
          <Axis $top={3}>5.90</Axis>
          <Axis $top={107}>5.08</Axis>
        </Panel>

        <Dates>
          <Plot viewBox="12 0 1176 91" preserveAspectRatio="none">
            {candles.map((_, i) => {
              if (i < 7) return null;
              const major = i === 10 || i === 23 || i === 36;
              return <line key={i} x1={xAt(i) + 1} x2={xAt(i) + 1} y1="0" y2={major ? 16 : 10} stroke="#b2b2b2" strokeWidth={major ? 3 : 2} />;
            })}
          </Plot>
          <DateText $x={0.5}>20250207</DateText>
          <DateText $x={19.7}>20250221</DateText>
          <DateText $x={53.9}>20250312</DateText>
          <DateText $x={80}>20250331</DateText>
        </Dates>

        <Notes viewBox="0 657 1200 1500">
          <g fill="none" stroke="#ff0000" strokeWidth="12" strokeLinecap="round" strokeLinejoin="round">
            <ellipse cx="287" cy="813" rx="123" ry="76" />
            <ellipse cx="733" cy="764" rx="134" ry="69" />
            <ellipse cx="1126" cy="1772" rx="88" ry="158" />
            <path d="M124 1032H1165" />
            <path d="M110 1233 600 1143 920 1081 1180 1038" />
            <path d="M1148 1029 1188 1037 1154 1067" />
          </g>
          <g fill="#f50a0a" fontSize="50">
            <text x="360" y="903">要有效突破这两目标</text>
            <text x="356" y="1018" fontSize="53">560作为支撑</text>
            <text x="766" y="1172" fontSize="65">慢牛成立</text>
            <text x="785" y="1767" fontSize="71">这个金叉是宝</text>
          </g>
        </Notes>
      </Charts>

      <PromoWrap>
        <Promo>
          <svg width="51" height="44" viewBox="0 0 51 44" fill="#2f78cf" aria-hidden="true">
            <path d="M0 14H6V31H0ZM10 14 42 2 50 1V43L42 40 34 35 30 39 18 37 17 33 10 30Z" />
          </svg>
          <PromoText href="#promo">货币+提现额度增加25%，盘中最快1秒到账！</PromoText>
          <PromoClose aria-label="关闭"><Close size={36} w={3} /></PromoClose>
        </Promo>
      </PromoWrap>

      <Strip />
      <BottomBar>
        <IndexCell>
          <Triangle $up $w={24} $h={9} $c="#77787a" />
          <IndexValue>3335.75</IndexValue>
          <IndexRow><IndexName>上证</IndexName><span>-0.46%</span></IndexRow>
        </IndexCell>
        <NavItem>
          <svg width="72" height="66" viewBox="0 0 72 66" fill="none" stroke="currentColor" strokeWidth="3">
            <path d="M18 9A30 30 0 0 1 66 33Q66 40 64 46L70 40M54 57A30 30 0 0 1 6 33Q6 26 9 20L2 24" />
            <path d="M26 19 36 31 46 19M36 31V50M26 33H46M26 41H46" />
          </svg>
          交易
        </NavItem>
        <NavItem>
          <svg width="66" height="66" viewBox="0 0 66 66" fill="none" stroke="currentColor" strokeWidth="3">
            <path d="M43 4H12Q4 4 4 12V54Q4 62 12 62H54Q62 62 62 54V22" />
            <path d="M62 4 53 13" strokeWidth="8" /><path d="M51 15 28 38 24 43 30 40 55 17Z" fill="currentColor" />
          </svg>
          发帖
        </NavItem>
        <NavItem>
          <svg width="66" height="66" viewBox="0 0 66 66" fill="none" stroke="currentColor" strokeWidth="3">
            <rect x="5" y="5" width="25" height="25" rx="4" /><path d="M47 3 61 18 47 32 34 18Z" strokeLinejoin="round" />
            <rect x="5" y="36" width="25" height="25" rx="4" /><rect x="35" y="36" width="25" height="25" rx="4" />
          </svg>
          功能
        </NavItem>
        <NavItem>
          <svg width="66" height="66" viewBox="0 0 66 66" fill="none" stroke="currentColor" strokeWidth="3">
            <circle cx="33" cy="33" r="29" />
            <g fill="currentColor" stroke="none"><circle cx="20" cy="33" r="3" /><circle cx="33" cy="33" r="3" /><circle cx="46" cy="33" r="3" /></g>
          </svg>
          设自选
        </NavItem>
      </BottomBar>

      <Footer>
        <FooterArt width="540" height="293" viewBox="660 2515 540 293" fill="none" stroke="#20252c" strokeWidth="3" aria-hidden="true">
          <path d="M757 2515 890 2650M687 2685 880 2585M685 2590 760 2760M690 2800 760 2710M1040 2515 960 2560M1040 2515 1200 2590M1040 2515 1180 2720M1040 2515V2560M790 2808 930 2710M1040 2515 1110 2808M1075 2770V2808" strokeWidth="2" />
          <g fill="#20242a"><rect x="881" y="2562" width="33" height="109" /><rect x="820" y="2672" width="33" height="67" /><rect x="939" y="2770" width="33" height="40" /></g>
          <path d="M896 2532V2723M835 2636V2790" strokeWidth="6" />
          <g fill="#16202e" stroke="#16202e"><rect x="759" y="2711" width="36" height="99" /><path d="M778 2658V2720" strokeWidth="6" /></g>
        </FooterArt>
        <Brand>
          <BrandRow><Feathers size={78} />东方财富</BrandRow>
          <Tagline>来东方财富，看更多行情信息</Tagline>
        </Brand>
        <QrCard><Qr /></QrCard>
      </Footer>
    </Page>
  );
}
